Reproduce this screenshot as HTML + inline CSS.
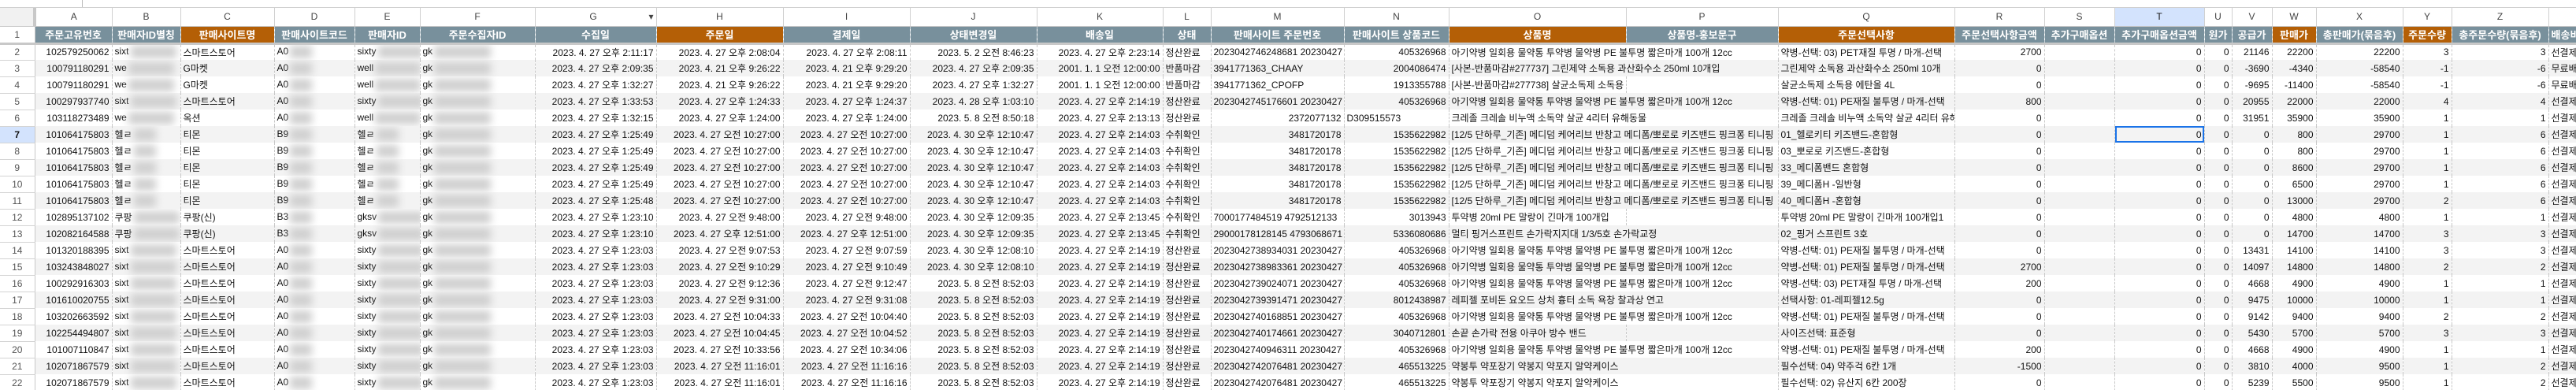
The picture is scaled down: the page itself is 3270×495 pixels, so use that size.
<!DOCTYPE html>
<html><head><meta charset="utf-8">
<style>
html,body{margin:0;padding:0;width:3270px;height:495px;overflow:hidden;background:#fff;}
body{font-family:"Liberation Sans","Noto Sans CJK KR",sans-serif;font-size:12px;color:#111;}
.top{height:9px;border-bottom:1px solid #d0d0d0;position:relative;}
.top i{position:absolute;left:104px;top:0;width:1px;height:9px;background:#bbb;}
table{border-collapse:collapse;table-layout:fixed;width:3370px;}
td,th{padding:0 3px;white-space:nowrap;overflow:hidden;height:21px;box-sizing:border-box;border-right:1px dashed #c8c8c8;}
tr.cl th,tr.cl td{height:23px;font-weight:normal;color:#444;text-align:center;border-right:1px solid #d0d0d0;border-bottom:1px solid #c8c8c8;background:#fff;font-size:12px;}
tr.cl th{background:#f1f1f1;border-right:4px solid #c8c8c8;}
tr.h td{height:22px;background:#78909c;color:#fff;font-weight:bold;text-align:center;font-size:13px;border-right:1px dashed #c9d3d8;border-bottom:3px solid #c8c8c8;}
tr.h td.o{background:#b45f06;}
tr.h th{border-bottom:3px solid #c8c8c8;}
th{font-weight:normal;color:#555;text-align:center;border-right:1px solid #c8c8c8;border-bottom:1px solid #d4d4d4;background:#fff;}
tr.g td{background:#f3f3f3;}
td.r{text-align:right;}
.bl{display:inline-block;width:58px;height:16px;background:#cfcfcf;filter:blur(5px);vertical-align:middle;margin-left:2px;}
.bs{width:28px;}
.bw{width:72px;}
.sel{position:relative;}
.sel:after{content:"";position:absolute;left:0;top:0;right:0;bottom:0;border:2px solid #1a73e8;}
th.hl{background:#d3e3fd;color:#111;font-weight:bold;}
</style></head><body>
<div class="top"><i></i></div>
<table>
<colgroup><col style="width:44px"><col style="width:98px"><col style="width:87px"><col style="width:119px"><col style="width:102px"><col style="width:83px"><col style="width:146px"><col style="width:154px"><col style="width:161px"><col style="width:161px"><col style="width:161px"><col style="width:160px"><col style="width:61px"><col style="width:169px"><col style="width:133px"><col style="width:225px"><col style="width:193px"><col style="width:224px"><col style="width:114px"><col style="width:89px"><col style="width:114px"><col style="width:35px"><col style="width:51px"><col style="width:56px"><col style="width:110px"><col style="width:62px"><col style="width:123px"><col style="width:135px"></colgroup>
<tr class="cl"><th></th><td>A</td><td>B</td><td>C</td><td>D</td><td>E</td><td>F</td><td>G <span style="float:right">▾</span></td><td>H</td><td>I</td><td>J</td><td>K</td><td>L</td><td>M</td><td>N</td><td>O</td><td>P</td><td>Q</td><td>R</td><td>S</td><td style="background:#d3e3fd;color:#111">T</td><td>U</td><td>V</td><td>W</td><td>X</td><td>Y</td><td>Z</td><td></td></tr>
<tr class="h"><th>1</th><td>주문고유번호</td><td>판매자ID별칭</td><td class="o">판매사이트명</td><td>판매사이트코드</td><td>판매자ID</td><td>주문수집자ID</td><td>수집일</td><td class="o">주문일</td><td>결제일</td><td>상태변경일</td><td>배송일</td><td>상태</td><td>판매사이트 주문번호</td><td>판매사이트 상품코드</td><td class="o">상품명</td><td>상품명-홍보문구</td><td class="o">주문선택사항</td><td>주문선택사항금액</td><td>추가구매옵션</td><td>추가구매옵션금액</td><td>원가</td><td>공급가</td><td class="o">판매가</td><td>총판매가(묶음후)</td><td class="o">주문수량</td><td>총주문수량(묶음후)</td><td style="text-align:left">배송비</td></tr>

<tr><th>2</th><td class="r">102579250062</td><td>sixt<span class="bl"></span></td><td>스마트스토어</td><td>A0<span class="bl bs"></span></td><td>sixty<span class="bl"></span></td><td>gk<span class="bl bw"></span></td><td class="r">2023. 4. 27 오후 2:11:17</td><td class="r">2023. 4. 27 오후 2:08:04</td><td class="r">2023. 4. 27 오후 2:08:11</td><td class="r">2023. 5. 2 오전 8:46:23</td><td class="r">2023. 4. 27 오후 2:23:14</td><td>정산완료</td><td>2023042746248681 20230427</td><td class="r">405326968</td><td colspan="2">아기약병 일회용 물약통 투약병 물약병 PE 불투명 짧은마개 100개 12cc</td><td>약병-선택: 03) PET재질 투명 / 마개-선택</td><td class="r">2700</td><td></td><td class="r">0</td><td class="r">0</td><td class="r">21146</td><td class="r">22200</td><td class="r">22200</td><td class="r">3</td><td class="r">3</td><td>선결제</td></tr>
<tr class="g"><th>3</th><td class="r">100791180291</td><td>we<span class="bl"></span></td><td>G마켓</td><td>A0<span class="bl bs"></span></td><td>well<span class="bl"></span></td><td>gk<span class="bl bw"></span></td><td class="r">2023. 4. 27 오후 2:09:35</td><td class="r">2023. 4. 21 오후 9:26:22</td><td class="r">2023. 4. 21 오후 9:29:20</td><td class="r">2023. 4. 27 오후 2:09:35</td><td class="r">2001. 1. 1 오전 12:00:00</td><td>반품마감</td><td>3941771363_CHAAY</td><td class="r">2004086474</td><td colspan="2">[사본-반품마감#277737] 그린제약 소독용 과산화수소 250ml 10개입</td><td>그린제약 소독용 과산화수소 250ml 10개</td><td class="r">0</td><td></td><td class="r">0</td><td class="r">0</td><td class="r">-3690</td><td class="r">-4340</td><td class="r">-58540</td><td class="r">-1</td><td class="r">-6</td><td>무료배송</td></tr>
<tr><th>4</th><td class="r">100791180291</td><td>we<span class="bl"></span></td><td>G마켓</td><td>A0<span class="bl bs"></span></td><td>well<span class="bl"></span></td><td>gk<span class="bl bw"></span></td><td class="r">2023. 4. 27 오후 1:32:27</td><td class="r">2023. 4. 21 오후 9:26:22</td><td class="r">2023. 4. 21 오후 9:29:20</td><td class="r">2023. 4. 27 오후 1:32:27</td><td class="r">2001. 1. 1 오전 12:00:00</td><td>반품마감</td><td>3941771362_CPOFP</td><td class="r">1913355788</td><td>[사본-반품마감#277738] 살균소독제 소독용 에탄올 4L</td><td></td><td>살균소독제 소독용 에탄올 4L</td><td class="r">0</td><td></td><td class="r">0</td><td class="r">0</td><td class="r">-9695</td><td class="r">-11400</td><td class="r">-58540</td><td class="r">-1</td><td class="r">-6</td><td>무료배송</td></tr>
<tr class="g"><th>5</th><td class="r">100297937740</td><td>sixt<span class="bl"></span></td><td>스마트스토어</td><td>A0<span class="bl bs"></span></td><td>sixty<span class="bl"></span></td><td>gk<span class="bl bw"></span></td><td class="r">2023. 4. 27 오후 1:33:53</td><td class="r">2023. 4. 27 오후 1:24:33</td><td class="r">2023. 4. 27 오후 1:24:37</td><td class="r">2023. 4. 28 오후 1:03:10</td><td class="r">2023. 4. 27 오후 2:14:19</td><td>정산완료</td><td>2023042745176601 20230427</td><td class="r">405326968</td><td colspan="2">아기약병 일회용 물약통 투약병 물약병 PE 불투명 짧은마개 100개 12cc</td><td>약병-선택: 01) PE재질 불투명 / 마개-선택</td><td class="r">800</td><td></td><td class="r">0</td><td class="r">0</td><td class="r">20955</td><td class="r">22000</td><td class="r">22000</td><td class="r">4</td><td class="r">4</td><td>선결제</td></tr>
<tr><th>6</th><td class="r">103118273489</td><td>we<span class="bl"></span></td><td>옥션</td><td>A0<span class="bl bs"></span></td><td>well<span class="bl"></span></td><td>gk<span class="bl bw"></span></td><td class="r">2023. 4. 27 오후 1:32:15</td><td class="r">2023. 4. 27 오후 1:24:00</td><td class="r">2023. 4. 27 오후 1:24:00</td><td class="r">2023. 5. 8 오전 8:50:18</td><td class="r">2023. 4. 27 오후 2:13:13</td><td>정산완료</td><td class="r">2372077132</td><td>D309515573</td><td colspan="2">크레졸 크레솔 비누액 소독약 살균 4리터 유해동물</td><td>크레졸 크레솔 비누액 소독약 살균 4리터 유해동물</td><td class="r">0</td><td></td><td class="r">0</td><td class="r">0</td><td class="r">31951</td><td class="r">35900</td><td class="r">35900</td><td class="r">1</td><td class="r">1</td><td>선결제</td></tr>
<tr class="g"><th class="hl">7</th><td class="r">101064175803</td><td>헬ㄹ<span class="bl bs"></span></td><td>티몬</td><td>B9<span class="bl bs"></span></td><td>헬ㄹ<span class="bl bs"></span></td><td>gk<span class="bl bw"></span></td><td class="r">2023. 4. 27 오후 1:25:49</td><td class="r">2023. 4. 27 오전 10:27:00</td><td class="r">2023. 4. 27 오전 10:27:00</td><td class="r">2023. 4. 30 오후 12:10:47</td><td class="r">2023. 4. 27 오후 2:14:03</td><td>수취확인</td><td class="r">3481720178</td><td class="r">1535622982</td><td colspan="2">[12/5 단하루_기존] 메디덤 케어리브 반창고 메디폼/뽀로로 키즈밴드 핑크퐁 티니핑</td><td>01_헬로키티 키즈밴드-혼합형</td><td class="r">0</td><td></td><td class="r sel">0</td><td class="r">0</td><td class="r">0</td><td class="r">800</td><td class="r">29700</td><td class="r">1</td><td class="r">6</td><td>선결제</td></tr>
<tr><th>8</th><td class="r">101064175803</td><td>헬ㄹ<span class="bl bs"></span></td><td>티몬</td><td>B9<span class="bl bs"></span></td><td>헬ㄹ<span class="bl bs"></span></td><td>gk<span class="bl bw"></span></td><td class="r">2023. 4. 27 오후 1:25:49</td><td class="r">2023. 4. 27 오전 10:27:00</td><td class="r">2023. 4. 27 오전 10:27:00</td><td class="r">2023. 4. 30 오후 12:10:47</td><td class="r">2023. 4. 27 오후 2:14:03</td><td>수취확인</td><td class="r">3481720178</td><td class="r">1535622982</td><td colspan="2">[12/5 단하루_기존] 메디덤 케어리브 반창고 메디폼/뽀로로 키즈밴드 핑크퐁 티니핑</td><td>03_뽀로로 키즈밴드-혼합형</td><td class="r">0</td><td></td><td class="r">0</td><td class="r">0</td><td class="r">0</td><td class="r">800</td><td class="r">29700</td><td class="r">1</td><td class="r">6</td><td>선결제</td></tr>
<tr class="g"><th>9</th><td class="r">101064175803</td><td>헬ㄹ<span class="bl bs"></span></td><td>티몬</td><td>B9<span class="bl bs"></span></td><td>헬ㄹ<span class="bl bs"></span></td><td>gk<span class="bl bw"></span></td><td class="r">2023. 4. 27 오후 1:25:49</td><td class="r">2023. 4. 27 오전 10:27:00</td><td class="r">2023. 4. 27 오전 10:27:00</td><td class="r">2023. 4. 30 오후 12:10:47</td><td class="r">2023. 4. 27 오후 2:14:03</td><td>수취확인</td><td class="r">3481720178</td><td class="r">1535622982</td><td colspan="2">[12/5 단하루_기존] 메디덤 케어리브 반창고 메디폼/뽀로로 키즈밴드 핑크퐁 티니핑</td><td>33_메디폼밴드 혼합형</td><td class="r">0</td><td></td><td class="r">0</td><td class="r">0</td><td class="r">0</td><td class="r">8600</td><td class="r">29700</td><td class="r">1</td><td class="r">6</td><td>선결제</td></tr>
<tr><th>10</th><td class="r">101064175803</td><td>헬ㄹ<span class="bl bs"></span></td><td>티몬</td><td>B9<span class="bl bs"></span></td><td>헬ㄹ<span class="bl bs"></span></td><td>gk<span class="bl bw"></span></td><td class="r">2023. 4. 27 오후 1:25:49</td><td class="r">2023. 4. 27 오전 10:27:00</td><td class="r">2023. 4. 27 오전 10:27:00</td><td class="r">2023. 4. 30 오후 12:10:47</td><td class="r">2023. 4. 27 오후 2:14:03</td><td>수취확인</td><td class="r">3481720178</td><td class="r">1535622982</td><td colspan="2">[12/5 단하루_기존] 메디덤 케어리브 반창고 메디폼/뽀로로 키즈밴드 핑크퐁 티니핑</td><td>39_메디폼H -일반형</td><td class="r">0</td><td></td><td class="r">0</td><td class="r">0</td><td class="r">0</td><td class="r">6500</td><td class="r">29700</td><td class="r">1</td><td class="r">6</td><td>선결제</td></tr>
<tr class="g"><th>11</th><td class="r">101064175803</td><td>헬ㄹ<span class="bl bs"></span></td><td>티몬</td><td>B9<span class="bl bs"></span></td><td>헬ㄹ<span class="bl bs"></span></td><td>gk<span class="bl bw"></span></td><td class="r">2023. 4. 27 오후 1:25:48</td><td class="r">2023. 4. 27 오전 10:27:00</td><td class="r">2023. 4. 27 오전 10:27:00</td><td class="r">2023. 4. 30 오후 12:10:47</td><td class="r">2023. 4. 27 오후 2:14:03</td><td>수취확인</td><td class="r">3481720178</td><td class="r">1535622982</td><td colspan="2">[12/5 단하루_기존] 메디덤 케어리브 반창고 메디폼/뽀로로 키즈밴드 핑크퐁 티니핑</td><td>40_메디폼H -혼합형</td><td class="r">0</td><td></td><td class="r">0</td><td class="r">0</td><td class="r">0</td><td class="r">13000</td><td class="r">29700</td><td class="r">2</td><td class="r">6</td><td>선결제</td></tr>
<tr><th>12</th><td class="r">102895137102</td><td>쿠팡<span class="bl"></span></td><td>쿠팡(신)</td><td>B3<span class="bl bs"></span></td><td>gksv<span class="bl"></span></td><td>gk<span class="bl bw"></span></td><td class="r">2023. 4. 27 오후 1:23:10</td><td class="r">2023. 4. 27 오전 9:48:00</td><td class="r">2023. 4. 27 오전 9:48:00</td><td class="r">2023. 4. 30 오후 12:09:35</td><td class="r">2023. 4. 27 오후 2:13:45</td><td>수취확인</td><td>7000177484519 4792512133</td><td class="r">3013943</td><td>투약병 20ml PE 말랑이 긴마개 100개입</td><td></td><td>투약병 20ml PE 말랑이 긴마개 100개입1</td><td class="r">0</td><td></td><td class="r">0</td><td class="r">0</td><td class="r">0</td><td class="r">4800</td><td class="r">4800</td><td class="r">1</td><td class="r">1</td><td>선결제</td></tr>
<tr class="g"><th>13</th><td class="r">102082164588</td><td>쿠팡<span class="bl"></span></td><td>쿠팡(신)</td><td>B3<span class="bl bs"></span></td><td>gksv<span class="bl"></span></td><td>gk<span class="bl bw"></span></td><td class="r">2023. 4. 27 오후 1:23:10</td><td class="r">2023. 4. 27 오후 12:51:00</td><td class="r">2023. 4. 27 오후 12:51:00</td><td class="r">2023. 4. 30 오후 12:09:35</td><td class="r">2023. 4. 27 오후 2:13:45</td><td>수취확인</td><td>29000178128145 4793068671</td><td class="r">5336080686</td><td colspan="2">멀티 핑거스프린트 손가락지지대 1/3/5호 손가락교정</td><td>02_핑거 스프린트 3호</td><td class="r">0</td><td></td><td class="r">0</td><td class="r">0</td><td class="r">0</td><td class="r">14700</td><td class="r">14700</td><td class="r">3</td><td class="r">3</td><td>선결제</td></tr>
<tr><th>14</th><td class="r">101320188395</td><td>sixt<span class="bl"></span></td><td>스마트스토어</td><td>A0<span class="bl bs"></span></td><td>sixty<span class="bl"></span></td><td>gk<span class="bl bw"></span></td><td class="r">2023. 4. 27 오후 1:23:03</td><td class="r">2023. 4. 27 오전 9:07:53</td><td class="r">2023. 4. 27 오전 9:07:59</td><td class="r">2023. 4. 30 오후 12:08:10</td><td class="r">2023. 4. 27 오후 2:14:19</td><td>정산완료</td><td>2023042738934031 20230427</td><td class="r">405326968</td><td colspan="2">아기약병 일회용 물약통 투약병 물약병 PE 불투명 짧은마개 100개 12cc</td><td>약병-선택: 01) PE재질 불투명 / 마개-선택</td><td class="r">0</td><td></td><td class="r">0</td><td class="r">0</td><td class="r">13431</td><td class="r">14100</td><td class="r">14100</td><td class="r">3</td><td class="r">3</td><td>선결제</td></tr>
<tr class="g"><th>15</th><td class="r">103243848027</td><td>sixt<span class="bl"></span></td><td>스마트스토어</td><td>A0<span class="bl bs"></span></td><td>sixty<span class="bl"></span></td><td>gk<span class="bl bw"></span></td><td class="r">2023. 4. 27 오후 1:23:03</td><td class="r">2023. 4. 27 오전 9:10:29</td><td class="r">2023. 4. 27 오전 9:10:49</td><td class="r">2023. 4. 30 오후 12:08:10</td><td class="r">2023. 4. 27 오후 2:14:19</td><td>정산완료</td><td>2023042738983361 20230427</td><td class="r">405326968</td><td colspan="2">아기약병 일회용 물약통 투약병 물약병 PE 불투명 짧은마개 100개 12cc</td><td>약병-선택: 01) PE재질 불투명 / 마개-선택</td><td class="r">2700</td><td></td><td class="r">0</td><td class="r">0</td><td class="r">14097</td><td class="r">14800</td><td class="r">14800</td><td class="r">2</td><td class="r">2</td><td>선결제</td></tr>
<tr><th>16</th><td class="r">100292916303</td><td>sixt<span class="bl"></span></td><td>스마트스토어</td><td>A0<span class="bl bs"></span></td><td>sixty<span class="bl"></span></td><td>gk<span class="bl bw"></span></td><td class="r">2023. 4. 27 오후 1:23:03</td><td class="r">2023. 4. 27 오전 9:12:36</td><td class="r">2023. 4. 27 오전 9:12:47</td><td class="r">2023. 5. 8 오전 8:52:03</td><td class="r">2023. 4. 27 오후 2:14:19</td><td>정산완료</td><td>2023042739024071 20230427</td><td class="r">405326968</td><td colspan="2">아기약병 일회용 물약통 투약병 물약병 PE 불투명 짧은마개 100개 12cc</td><td>약병-선택: 03) PET재질 투명 / 마개-선택</td><td class="r">200</td><td></td><td class="r">0</td><td class="r">0</td><td class="r">4668</td><td class="r">4900</td><td class="r">4900</td><td class="r">1</td><td class="r">1</td><td>선결제</td></tr>
<tr class="g"><th>17</th><td class="r">101610020755</td><td>sixt<span class="bl"></span></td><td>스마트스토어</td><td>A0<span class="bl bs"></span></td><td>sixty<span class="bl"></span></td><td>gk<span class="bl bw"></span></td><td class="r">2023. 4. 27 오후 1:23:03</td><td class="r">2023. 4. 27 오전 9:31:00</td><td class="r">2023. 4. 27 오전 9:31:08</td><td class="r">2023. 5. 8 오전 8:52:03</td><td class="r">2023. 4. 27 오후 2:14:19</td><td>정산완료</td><td>2023042739391471 20230427</td><td class="r">8012438987</td><td colspan="2">레피젤 포비돈 요오드 상처 흉터 소독 욕창 찰과상 연고</td><td>선택사항: 01-레피젤12.5g</td><td class="r">0</td><td></td><td class="r">0</td><td class="r">0</td><td class="r">9475</td><td class="r">10000</td><td class="r">10000</td><td class="r">1</td><td class="r">1</td><td>선결제</td></tr>
<tr><th>18</th><td class="r">103202663592</td><td>sixt<span class="bl"></span></td><td>스마트스토어</td><td>A0<span class="bl bs"></span></td><td>sixty<span class="bl"></span></td><td>gk<span class="bl bw"></span></td><td class="r">2023. 4. 27 오후 1:23:03</td><td class="r">2023. 4. 27 오전 10:04:33</td><td class="r">2023. 4. 27 오전 10:04:40</td><td class="r">2023. 5. 8 오전 8:52:03</td><td class="r">2023. 4. 27 오후 2:14:19</td><td>정산완료</td><td>2023042740168851 20230427</td><td class="r">405326968</td><td colspan="2">아기약병 일회용 물약통 투약병 물약병 PE 불투명 짧은마개 100개 12cc</td><td>약병-선택: 01) PE재질 불투명 / 마개-선택</td><td class="r">0</td><td></td><td class="r">0</td><td class="r">0</td><td class="r">9142</td><td class="r">9400</td><td class="r">9400</td><td class="r">2</td><td class="r">2</td><td>선결제</td></tr>
<tr class="g"><th>19</th><td class="r">102254494807</td><td>sixt<span class="bl"></span></td><td>스마트스토어</td><td>A0<span class="bl bs"></span></td><td>sixty<span class="bl"></span></td><td>gk<span class="bl bw"></span></td><td class="r">2023. 4. 27 오후 1:23:03</td><td class="r">2023. 4. 27 오전 10:04:45</td><td class="r">2023. 4. 27 오전 10:04:52</td><td class="r">2023. 5. 8 오전 8:52:03</td><td class="r">2023. 4. 27 오후 2:14:19</td><td>정산완료</td><td>2023042740174661 20230427</td><td class="r">3040712801</td><td>손끝 손가락 전용 아쿠아 방수 밴드</td><td></td><td>사이즈선택: 표준형</td><td class="r">0</td><td></td><td class="r">0</td><td class="r">0</td><td class="r">5430</td><td class="r">5700</td><td class="r">5700</td><td class="r">3</td><td class="r">3</td><td>선결제</td></tr>
<tr><th>20</th><td class="r">101007110847</td><td>sixt<span class="bl"></span></td><td>스마트스토어</td><td>A0<span class="bl bs"></span></td><td>sixty<span class="bl"></span></td><td>gk<span class="bl bw"></span></td><td class="r">2023. 4. 27 오후 1:23:03</td><td class="r">2023. 4. 27 오전 10:33:56</td><td class="r">2023. 4. 27 오전 10:34:06</td><td class="r">2023. 5. 8 오전 8:52:03</td><td class="r">2023. 4. 27 오후 2:14:19</td><td>정산완료</td><td>2023042740946311 20230427</td><td class="r">405326968</td><td colspan="2">아기약병 일회용 물약통 투약병 물약병 PE 불투명 짧은마개 100개 12cc</td><td>약병-선택: 01) PE재질 불투명 / 마개-선택</td><td class="r">200</td><td></td><td class="r">0</td><td class="r">0</td><td class="r">4668</td><td class="r">4900</td><td class="r">4900</td><td class="r">1</td><td class="r">1</td><td>선결제</td></tr>
<tr class="g"><th>21</th><td class="r">102071867579</td><td>sixt<span class="bl"></span></td><td>스마트스토어</td><td>A0<span class="bl bs"></span></td><td>sixty<span class="bl"></span></td><td>gk<span class="bl bw"></span></td><td class="r">2023. 4. 27 오후 1:23:03</td><td class="r">2023. 4. 27 오전 11:16:01</td><td class="r">2023. 4. 27 오전 11:16:16</td><td class="r">2023. 5. 8 오전 8:52:03</td><td class="r">2023. 4. 27 오후 2:14:19</td><td>정산완료</td><td>2023042742076481 20230427</td><td class="r">465513225</td><td colspan="2">약봉투 약포장기 약봉지 약포지 알약케이스</td><td>필수선택: 04) 약주걱 6칸 1개</td><td class="r">-1500</td><td></td><td class="r">0</td><td class="r">0</td><td class="r">3810</td><td class="r">4000</td><td class="r">9500</td><td class="r">1</td><td class="r">2</td><td>선결제</td></tr>
<tr><th>22</th><td class="r">102071867579</td><td>sixt<span class="bl"></span></td><td>스마트스토어</td><td>A0<span class="bl bs"></span></td><td>sixty<span class="bl"></span></td><td>gk<span class="bl bw"></span></td><td class="r">2023. 4. 27 오후 1:23:03</td><td class="r">2023. 4. 27 오전 11:16:01</td><td class="r">2023. 4. 27 오전 11:16:16</td><td class="r">2023. 5. 8 오전 8:52:03</td><td class="r">2023. 4. 27 오후 2:14:19</td><td>정산완료</td><td>2023042742076481 20230427</td><td class="r">465513225</td><td colspan="2">약봉투 약포장기 약봉지 약포지 알약케이스</td><td>필수선택: 02) 유산지 6칸 200장</td><td class="r">0</td><td></td><td class="r">0</td><td class="r">0</td><td class="r">5239</td><td class="r">5500</td><td class="r">9500</td><td class="r">1</td><td class="r">2</td><td>선결제</td></tr>
</table>
</body></html>
